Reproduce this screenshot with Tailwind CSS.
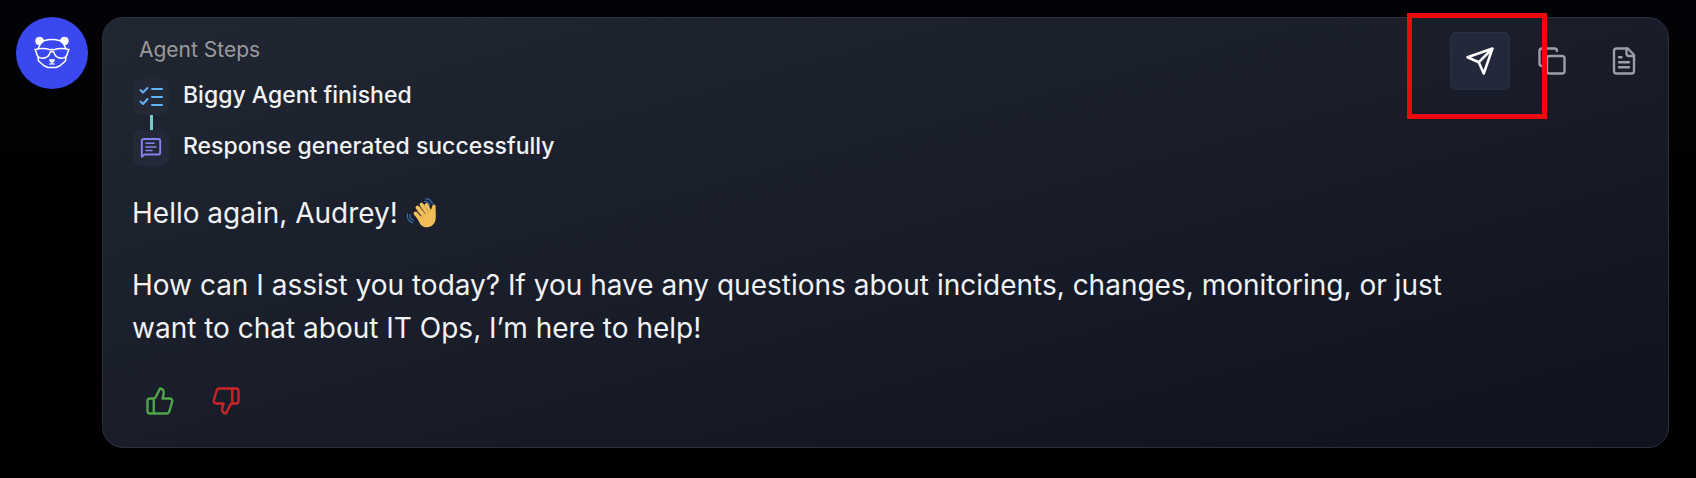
<!DOCTYPE html>
<html lang="en" class="dark">
  <head>
    <meta charset="UTF-8" />
    <meta name="viewport" content="width=device-width, initial-scale=1.0" />
    <title>Biggy Agent</title>
    <script src="https://cdn.jsdelivr.net/npm/@tailwindcss/browser@4"></script>
  </head>
  <body
    class="min-h-screen bg-linear-to-b from-[#030307] to-black font-[Inter,'Liberation_Sans',sans-serif] text-[#f1f2f4]"
  >
    <main class="flex items-start gap-[14px] pt-[17px] pl-4 pr-[27px]">
      <!-- Avatar -->
      <div
        class="flex size-[72px] shrink-0 items-center justify-center rounded-full bg-[#3a49ef]"
      >
        <svg
          class="size-9"
          viewBox="0 0 36 36"
          fill="none"
          stroke="white"
          stroke-width="1.5"
          stroke-linejoin="round"
          stroke-linecap="round"
          role="img"
          aria-label="Biggy"
        >
          <path
            d="M3.600 10C.8 8.600.6 4.200 2.800 2.600c2.600-1.800 6.200-.8 7 2.200L9 6.800 6 10zM32.400 10c2.800-1.400 3-5.800.8-7.400-2.600-1.800-6.200-.8-7 2.200l.8 2 3 3.200z"
            fill="white"
            stroke="none"
          />
          <path d="M4.500 13 6.500 8.500 10 5.700c5-1.600 11-1.600 16 0l3.500 2.800 2 4.500" />
          <path
            d="M1 14.500c5-1.200 11-1.200 15 .3 1.200-.5 2.800-.5 4 0 4-1.500 10-1.500 15-.3l-1.200 2.300c-.5 4.500-2.200 6.400-6.300 6.400-4.500 0-6.800-2.200-7.700-6-.8-1-2.800-1-3.600 0-.9 3.800-3.200 6-7.700 6-4.100 0-5.800-1.900-6.300-6.400z"
          />
          <path d="M4 22.500 4.600 26l5.400 4.800 4 1.700h8l4-1.700 5.400-4.800.6-3.500" />
          <path d="M15.800 25h4.400l-1.200 1.800h-2z" fill="white" />
          <path d="M18 26.500v2.300M15.500 29h5" stroke-width="1.200" />
        </svg>
      </div>

      <!-- Message card -->
      <section
        class="relative min-w-0 flex-1 rounded-[21px] border border-[#2a3040] bg-linear-to-br from-[#202632] via-[#181d29] to-[#10121e] pt-[18px] pb-[31px] pl-[29px] pr-[14px]"
      >
        <div class="flex items-start justify-between">
          <div>
            <h2 class="pl-[7px] text-[21px] leading-7 text-[#9b9a9b]">
              Agent Steps
            </h2>
            <ol class="mt-[15px] flex flex-col pl-px">
              <li class="flex gap-[14px]">
                <div class="flex flex-col items-center">
                  <span
                    class="flex size-9 items-center justify-center rounded-lg bg-[#232936]"
                  >
                    <svg
                      class="size-6"
                      viewBox="0 0 24 24"
                      fill="none"
                      stroke="#63b3f6"
                      stroke-width="2"
                      stroke-linecap="round"
                      stroke-linejoin="round"
                      aria-hidden="true"
                    >
                      <path d="m1.500 5 2.500 2.500L8.500 3M1.500 16.500 4 19l4.500-5" />
                      <path d="M13 4h10M13 12h10M13 20h10" />
                    </svg>
                  </span>
                  <span class="h-[15px] w-[3px] bg-[#6fcfc4]"></span>
                </div>
                <span class="text-[23px] leading-8 font-medium"
                  >Biggy Agent finished</span
                >
              </li>
              <li class="flex gap-[14px]">
                <span
                  class="flex size-9 items-center justify-center rounded-lg bg-[#232936]"
                >
                  <svg
                    class="size-6"
                    viewBox="0 0 24 24"
                    fill="none"
                    stroke="#8583f2"
                    stroke-width="1.900"
                    stroke-linecap="round"
                    stroke-linejoin="round"
                    aria-hidden="true"
                  >
                    <path
                      d="M2.800 20.800V5a2 2 0 0 1 2-2h14.400a2 2 0 0 1 2 2v11.500a2 2 0 0 1-2 2H5.500z"
                    />
                    <path d="M7 7.300h8M7 11h10M7 14.500h6" stroke-width="1.600" />
                  </svg>
                </span>
                <span class="text-[23px] leading-8 font-medium"
                  >Response generated successfully</span
                >
              </li>
            </ol>
          </div>

          <div class="-mt-1 flex gap-3 text-[#9c9fab]">
            <button
              type="button"
              aria-label="Send"
              class="flex h-[58px] w-[60px] items-center justify-center rounded-md border border-[#2a3042] bg-[#23283a] text-white"
            >
              <svg
                class="size-[30px]"
                viewBox="0 0 24 24"
                fill="none"
                stroke="currentColor"
                stroke-width="2"
                stroke-linecap="round"
                stroke-linejoin="round"
              >
                <path d="M22 2 15 22l-4-9-9-4 20-7zM22 2 11 13" />
              </svg>
            </button>
            <button
              type="button"
              aria-label="Copy"
              class="flex h-[58px] w-[60px] items-center justify-center rounded-md"
            >
              <svg
                class="size-[30px]"
                viewBox="0 0 24 24"
                fill="none"
                stroke="currentColor"
                stroke-width="1.900"
                stroke-linecap="round"
                stroke-linejoin="round"
              >
                <rect width="14" height="14" x="8" y="8" rx="2" />
                <path
                  d="M4 16c-1.100 0-2-.9-2-2V4c0-1.100.9-2 2-2h10c1.100 0 2 .9 2 2"
                />
              </svg>
            </button>
            <button
              type="button"
              aria-label="Document"
              class="flex h-[58px] w-[60px] items-center justify-center rounded-md"
            >
              <svg
                class="size-[30px]"
                viewBox="0 0 24 24"
                fill="none"
                stroke="currentColor"
                stroke-width="1.900"
                stroke-linecap="round"
                stroke-linejoin="round"
              >
                <path
                  d="M15 2H6a2 2 0 0 0-2 2v16a2 2 0 0 0 2 2h12a2 2 0 0 0 2-2V7z"
                />
                <path d="M14 2v4a2 2 0 0 0 2 2h4M10 9H8M16 13H8M16 17H8" />
              </svg>
            </button>
          </div>
        </div>

        <div
          class="mt-[26px] flex max-w-[1330px] flex-col gap-[29px] text-[28px] leading-[43px]"
        >
          <p class="flex items-center gap-2">
            Hello again, Audrey!
            <svg class="size-8" viewBox="0 0 32 32" role="img" aria-label="Waving hand">
              <g fill="none" stroke="#3f6fb8" stroke-width="1.200" stroke-linecap="round">
                <path d="M18.500 3.500c2-.6 4.500 1 5.300 4M19.500 1c3-.6 6.200 1.600 7 5" />
                <path d="M4 16.500c-.6 2.500.8 4.800 3.500 5.800M1.500 16c-.8 4 1.300 7.500 5 8.600" />
              </g>
              <g stroke="#f3c260" stroke-width="3.800" stroke-linecap="round">
                <path d="m9.500 15.500 7 8M11.500 9.500l8 10M15.500 6.500l7 10M20.500 7l4 9" />
              </g>
              <path
                d="M11 20 24.500 13l2-5.500c.8-1.600 3-1.300 3.100.8l.2 9.700c.1 5-1.300 8.300-4.800 10.300-3.500 1.900-7.500 1.200-10.500-1.800z"
                fill="#f1bd58"
              />
              <path
                d="m11.300 13 5 6.200M14.500 9.500l5 6.500M19 8.500l3.700 5.800"
                fill="none"
                stroke="#c8873a"
                stroke-width=".8"
                stroke-linecap="round"
              />
            </svg>
          </p>
          <p>
            How can I assist you today? If you have any questions about
            incidents, changes, monitoring, or just want to chat about IT Ops,
            I’m here to help!
          </p>
        </div>

        <div class="mt-9 flex gap-9 pl-[13px]">
          <button type="button" aria-label="Good response" class="text-[#4fa54a]">
            <svg
              class="size-[30px]"
              viewBox="0 0 24 24"
              fill="none"
              stroke="currentColor"
              stroke-width="1.900"
              stroke-linecap="round"
              stroke-linejoin="round"
            >
              <path
                d="M7 10v12M15 5.880 14 10h5.830a2 2 0 0 1 1.920 2.560l-2.330 8A2 2 0 0 1 17.500 22H4a2 2 0 0 1-2-2v-8a2 2 0 0 1 2-2h2.760a2 2 0 0 0 1.790-1.110L12 2a3.130 3.130 0 0 1 3 3.880Z"
              />
            </svg>
          </button>
          <button type="button" aria-label="Bad response" class="text-[#cb2426]">
            <svg
              class="size-[30px]"
              viewBox="0 0 24 24"
              fill="none"
              stroke="currentColor"
              stroke-width="1.900"
              stroke-linecap="round"
              stroke-linejoin="round"
            >
              <path
                d="M17 14V2M9 18.120 10 14H4.170a2 2 0 0 1-1.920-2.560l2.330-8A2 2 0 0 1 6.500 2H20a2 2 0 0 1 2 2v8a2 2 0 0 1-2 2h-2.760a2 2 0 0 0-1.790 1.110L12 22a3.130 3.130 0 0 1-3-3.880Z"
              />
            </svg>
          </button>
        </div>

        <!-- Highlight around the send button -->
        <div
          class="pointer-events-none absolute -top-[5px] right-[121px] h-[106px] w-[140px] border-[5px] border-[#eb0909]"
        ></div>
      </section>
    </main>
  </body>
</html>
